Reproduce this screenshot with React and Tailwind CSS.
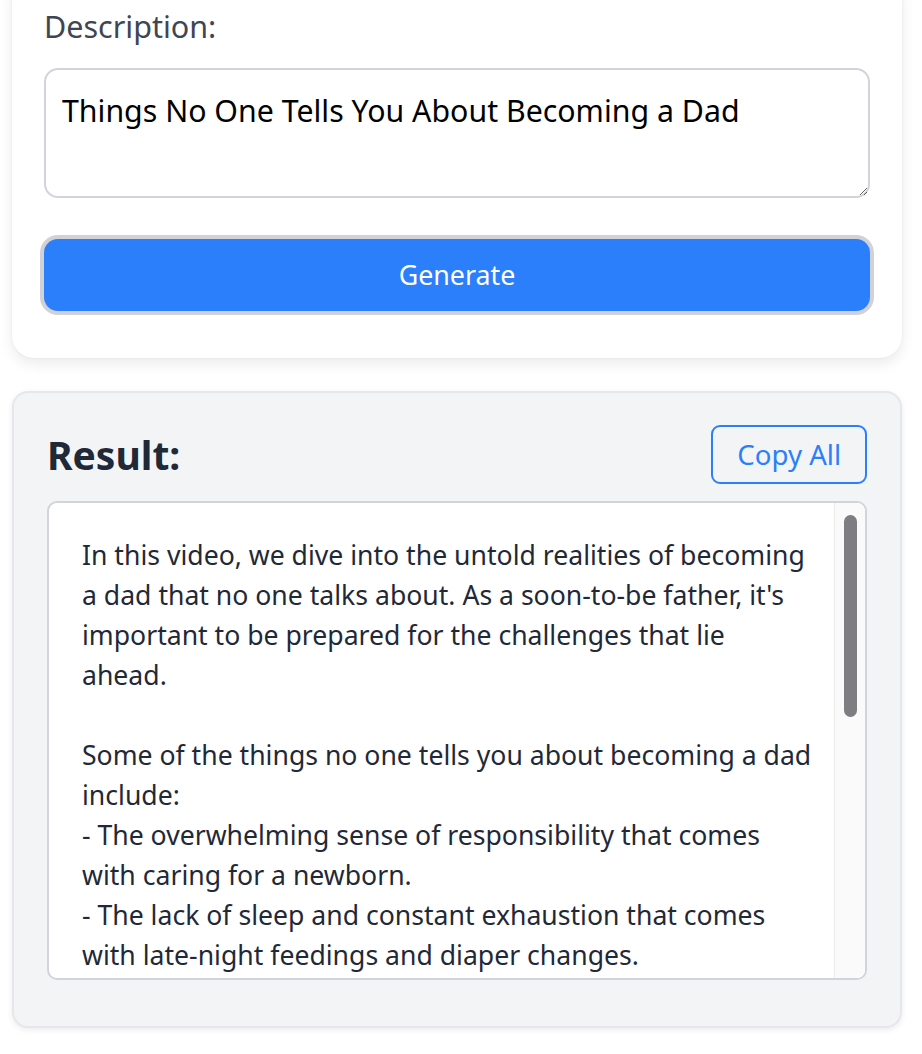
import { useState } from 'react'

const resultLines = [
  'In this video, we dive into the untold realities of becoming',
  "a dad that no one talks about. As a soon-to-be father, it's",
  'important to be prepared for the challenges that lie',
  'ahead.',
  '',
  'Some of the things no one tells you about becoming a dad',
  'include:',
  '- The overwhelming sense of responsibility that comes',
  'with caring for a newborn.',
  '- The lack of sleep and constant exhaustion that comes',
  'with late-night feedings and diaper changes.',
]

const App = () => {
  const [description, setDescription] = useState('Things No One Tells You About Becoming a Dad')

  return (
    <div className="min-h-screen bg-white font-['Noto_Sans',sans-serif] pb-8">
      <div className="pl-3 pr-5">
        <div className="-mt-6 rounded-[22px] bg-white px-8 pt-[30px] pb-[47px] shadow-[0_6px_14px_rgba(0,0,0,0.08),0_0_3px_rgba(0,0,0,0.06)]">
          <label className="block text-[30.5px] leading-[40px] text-[#3f4653]">Description:</label>
          <textarea
            value={description}
            onChange={(e) => setDescription(e.target.value)}
            className="mt-[22px] block h-[130px] w-full rounded-[14px] border-2 border-[#d1d5db] px-4 pt-[19px] text-[30.3px] leading-[44px] text-black outline-none"
          />
          <button className="mt-[41px] block h-[72px] w-full rounded-[14px] bg-[#2b7ffb] text-[26.8px] text-white ring-4 ring-[#d1d1d6]">
            Generate
          </button>
        </div>

        <div className="mt-[33px] rounded-[16px] border-2 border-[#e5e7eb] bg-[#f3f4f6] px-[33px] pt-[32px] pb-[46px] shadow-[0_2px_6px_rgba(0,0,0,0.08)]">
          <div className="flex items-center justify-between">
            <h2 className="text-[39px] font-bold leading-[48px] text-[#1f2937]">Result:</h2>
            <button className="h-[59px] rounded-[9px] border-2 border-[#2b7ffb] px-[24px] text-[27.6px] text-[#2b7ffb]">
              Copy All
            </button>
          </div>
          <div className="relative mt-[17px] h-[479px] overflow-hidden rounded-[10px] border-2 border-[#d1d5db] bg-white">
            <div className="pl-[33px] pt-[32px] text-[26.6px] leading-[40px] text-[#1f2937]">
              {resultLines.map((line, i) => (
                <div key={i} className="h-[40px] whitespace-nowrap">
                  {line}
                </div>
              ))}
            </div>
            <div className="absolute right-0 top-0 bottom-0 w-[31px] border-l border-[#ececec] bg-[#fafafa]">
              <div className="mx-auto mt-[12px] h-[202px] w-[13px] rounded-full bg-[#7d7d82]" />
            </div>
          </div>
        </div>
      </div>
    </div>
  )
}

export default App
